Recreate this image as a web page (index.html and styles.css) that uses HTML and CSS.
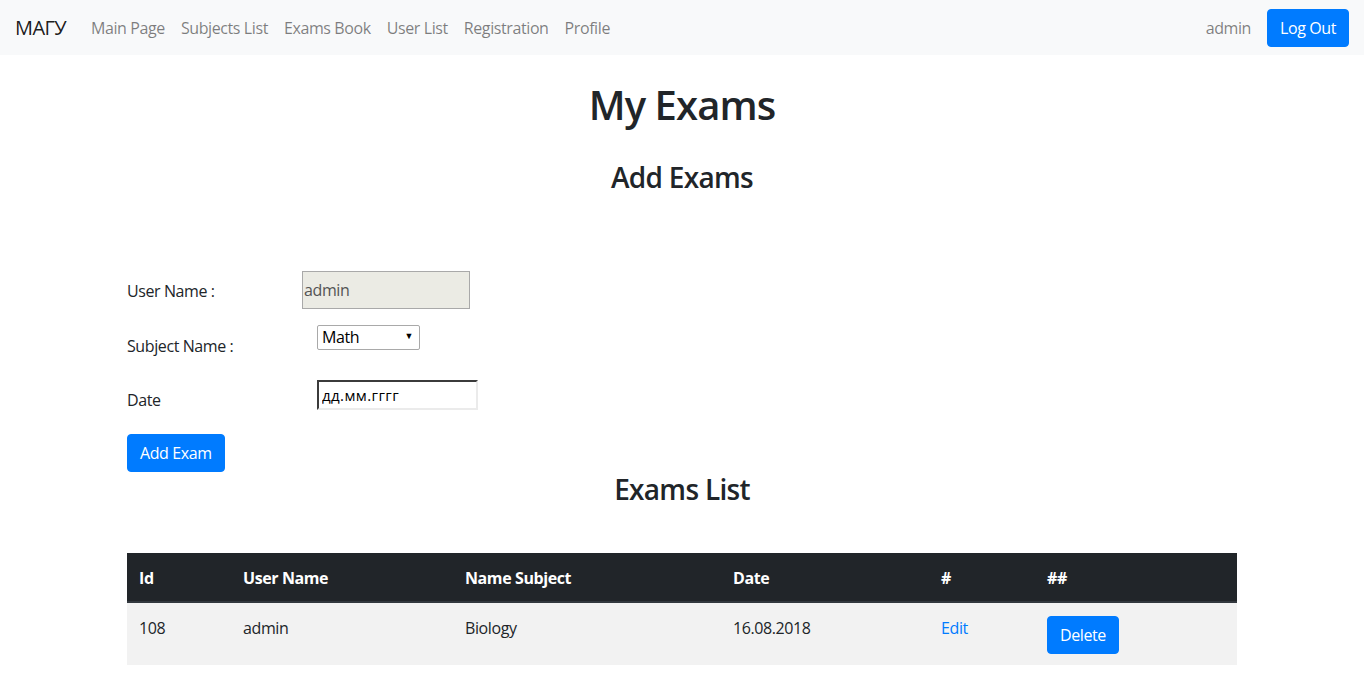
FILE: index.html
```html
<!DOCTYPE html>
<html lang="en">
<head>
<meta charset="utf-8">
<title>My Exams</title>
<link rel="stylesheet" href="styles.css">
</head>
<body>
<nav class="navbar">
  <a class="brand" href="#">МАГУ</a>
  <ul class="nav-links">
    <li><a href="#">Main Page</a></li>
    <li><a href="#">Subjects List</a></li>
    <li><a href="#">Exams Book</a></li>
    <li><a href="#">User List</a></li>
    <li><a href="#">Registration</a></li>
    <li><a href="#">Profile</a></li>
  </ul>
  <div class="nav-right">
    <a class="nav-user" href="#">admin</a>
    <button class="btn btn-primary">Log Out</button>
  </div>
</nav>

<main class="container">
  <h1 class="title">My Exams</h1>
  <h3 class="subtitle">Add Exams</h3>

  <form class="exam-form">
    <div class="form-row">
      <label class="form-label">User Name :</label>
      <input class="input-readonly" type="text" value="admin" readonly>
    </div>
    <div class="form-row row-select">
      <label class="form-label">Subject Name :</label>
      <span class="select-wrap">
        <select class="select">
          <option>Math</option>
          <option>Biology</option>
        </select>
        <span class="select-arrow">▼</span>
      </span>
    </div>
    <div class="form-row row-date">
      <label class="form-label">Date</label>
      <input class="input-date" type="text" value="дд.мм.гггг">
    </div>
    <button class="btn btn-primary" type="button">Add Exam</button>
  </form>

  <h3 class="subtitle list-title">Exams List</h3>

  <table class="table">
    <colgroup>
      <col class="c-id"><col class="c-user"><col class="c-subj"><col class="c-date"><col class="c-edit"><col class="c-del">
    </colgroup>
    <thead>
      <tr>
        <th>Id</th><th>User Name</th><th>Name Subject</th><th>Date</th><th>#</th><th>##</th>
      </tr>
    </thead>
    <tbody>
      <tr>
        <td>108</td><td>admin</td><td>Biology</td><td>16.08.2018</td>
        <td><a class="link" href="#">Edit</a></td>
        <td><button class="btn btn-primary" type="button">Delete</button></td>
      </tr>
    </tbody>
  </table>
</main>
</body>
</html>
```

FILE: styles.css
```css
* { box-sizing: border-box; }

body {
  margin: 0;
  font-family: "Segoe UI", "Open Sans", "Noto Sans", sans-serif;
  font-size: 16px;
  line-height: 1.5;
  color: #212529;
  background: #fff;
  letter-spacing: -0.4px;
}

a { text-decoration: none; }

.navbar {
  display: flex;
  align-items: center;
  height: 55px;
  padding: 0 15px 0 15px;
  background: #f8f9fa;
}

.brand {
  font-size: 20px;
  color: rgba(0,0,0,.9);
  margin-right: 17px;
  line-height: 30px;
  letter-spacing: -0.6px;
}

.nav-links {
  display: flex;
  list-style: none;
  margin: 0;
  padding: 0;
}

.nav-links a,
.nav-user {
  display: block;
  padding: 8px 8px;
  color: rgba(0,0,0,.5);
}

.nav-right {
  margin-left: auto;
  display: flex;
  align-items: center;
  gap: 8px;
}

.btn {
  display: inline-block;
  font-family: inherit;
  font-size: 16px;
  line-height: 24px;
  letter-spacing: -0.4px;
  padding: 6px 12px;
  border: 1px solid transparent;
  border-radius: 4px;
  cursor: pointer;
}

.btn-primary {
  background: #007bff;
  border-color: #007bff;
  color: #fff;
}

.container {
  max-width: 1140px;
  margin: 0 auto;
  padding: 0 15px;
}

.title {
  font-size: 40px;
  font-weight: 600;
  line-height: 1.2;
  text-align: center;
  margin: 26px 0 0;
  letter-spacing: -0.9px;
}

.subtitle {
  font-size: 28px;
  font-weight: 600;
  line-height: 1.2;
  text-align: center;
  margin: 32px 0 0;
  letter-spacing: -0.7px;
}

.exam-form {
  margin-top: 76px;
  display: flex;
  flex-direction: column;
  align-items: flex-start;
}

.form-row {
  display: flex;
  align-items: center;
  margin-bottom: 16px;
}

.form-label {
  width: 175px;
  padding-top: 2px;
}

.input-readonly {
  width: 168px;
  height: 38px;
  padding: 0 1px;
  font-family: inherit;
  font-size: 16px;
  letter-spacing: -0.4px;
  color: #545454;
  background: #ebebe4;
  border: 1px solid #a9a9a9;
  border-radius: 0;
}

.row-select { margin-bottom: 14px; }

.select-wrap {
  position: relative;
  display: inline-block;
  margin-left: 15px;
  margin-bottom: 16px;
}

.select {
  -webkit-appearance: none;
  appearance: none;
  width: 103px;
  height: 25px;
  padding: 0 0 0 4px;
  font-family: inherit;
  font-size: 16px;
  letter-spacing: -0.4px;
  line-height: 23px;
  color: #000;
  background: #fff;
  border: 1px solid #a9a9a9;
  border-radius: 2px;
  display: block;
}

.select-arrow {
  position: absolute;
  right: 7px;
  top: 5px;
  font-size: 9px;
  line-height: 12px;
  color: #000;
  pointer-events: none;
}

.input-date {
  width: 161px;
  height: 30px;
  margin-left: 15px;
  margin-bottom: 8px;
  padding: 0 3px;
  font-family: inherit;
  font-size: 15px;
  letter-spacing: 0.4px;
  color: #000;
  background: #fff;
  border: 2px inset #ebebeb;
  border-top-color: #8f8f8f;
  border-left-color: #8f8f8f;
}

.list-title {
  margin-top: 1px;
}

.table {
  width: 100%;
  margin-top: 47px;
  border-collapse: collapse;
  table-layout: fixed;
}

.c-id { width: 104px; }
.c-user { width: 222px; }
.c-subj { width: 268px; }
.c-date { width: 208px; }
.c-edit { width: 106px; }
.c-del { width: 202px; }

.table th,
.table td {
  padding: 13px 12px 11px;
  text-align: left;
  vertical-align: top;
}

.table thead th {
  background: #212529;
  color: #fff;
  font-weight: 700;
  border-bottom: 2px solid #32383e;
}

.table tbody tr {
  background: #f2f2f2;
}

.link {
  color: #007bff;
}
```
